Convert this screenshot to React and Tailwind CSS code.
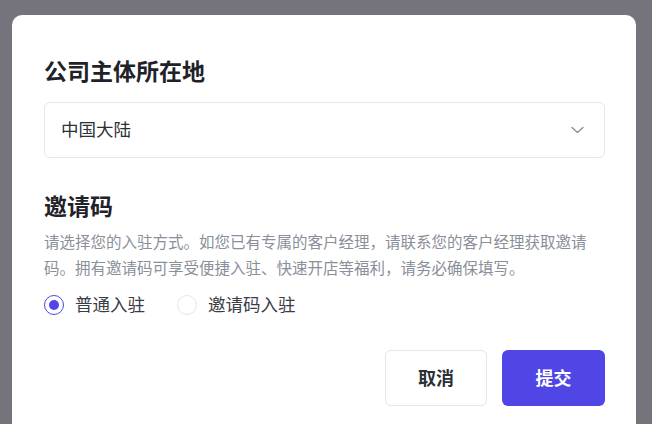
import { useState } from 'react'

const font = { fontFamily: '"Inter", "Noto Sans CJK SC", sans-serif' }

function Radio({ checked, label, onClick }) {
  return (
    <button onClick={onClick} className="flex flex-row items-center gap-[11px]">
      <span
        className={`flex h-[20px] w-[20px] items-center justify-center rounded-full border-[1.5px] ${
          checked ? 'border-[#4f46e5]' : 'border-[#e5e6eb]'
        }`}
      >
        {checked && <span className="h-[10px] w-[10px] rounded-full bg-[#4f46e5]" />}
      </span>
      <span className="text-[17.5px] leading-[26px] text-[#3a3d45]">{label}</span>
    </button>
  )
}

export default function App() {
  const [mode, setMode] = useState('normal')

  return (
    <div style={font} className="h-[424px] w-[652px] overflow-hidden bg-[#75747c] pt-[15px] pl-[12px] pr-[16px]">
      <div className="h-[430px] rounded-t-[10px] bg-white pl-[32px] pr-[31px] pt-[42px]">
        <h2 className="text-[23px] leading-[30px] font-semibold text-[#1f2329]">公司主体所在地</h2>

        <div className="mt-[15px] flex h-[56px] flex-row items-center justify-between rounded-[6px] border border-[#e5e6eb] pl-[16px] pr-[20px]">
          <span className="text-[17.5px] text-[#2b2f36]">中国大陆</span>
          <svg width="13" height="8" viewBox="0 0 13 8" fill="none" stroke="#8a8f99" strokeWidth="1.4" strokeLinecap="round" strokeLinejoin="round">
            <path d="M1 1.5 6.5 6.5 12 1.5" />
          </svg>
        </div>

        <h2 className="mt-[34px] text-[23px] leading-[30px] font-semibold text-[#1f2329]">邀请码</h2>
        <p className="mt-[8px] max-w-[550px] text-[15.5px] leading-[26px] text-[#8a8f99]">
          请选择您的入驻方式。如您已有专属的客户经理，请联系您的客户经理获取邀请码。拥有邀请码可享受便捷入驻、快速开店等福利，请务必确保填写。
        </p>

        <div className="mt-[10px] flex flex-row items-center gap-[32px]">
          <Radio checked={mode === 'normal'} label="普通入驻" onClick={() => setMode('normal')} />
          <Radio checked={mode === 'code'} label="邀请码入驻" onClick={() => setMode('code')} />
        </div>

        <div className="mt-[32px] flex flex-row justify-end gap-[15px]">
          <button className="h-[56px] w-[102px] rounded-[6px] border border-[#e5e6eb] bg-white text-[18px] font-semibold text-[#2b2f36]">
            取消
          </button>
          <button className="h-[56px] w-[103px] rounded-[6px] bg-[#4f46e5] text-[18px] font-semibold text-white">
            提交
          </button>
        </div>
      </div>
    </div>
  )
}
